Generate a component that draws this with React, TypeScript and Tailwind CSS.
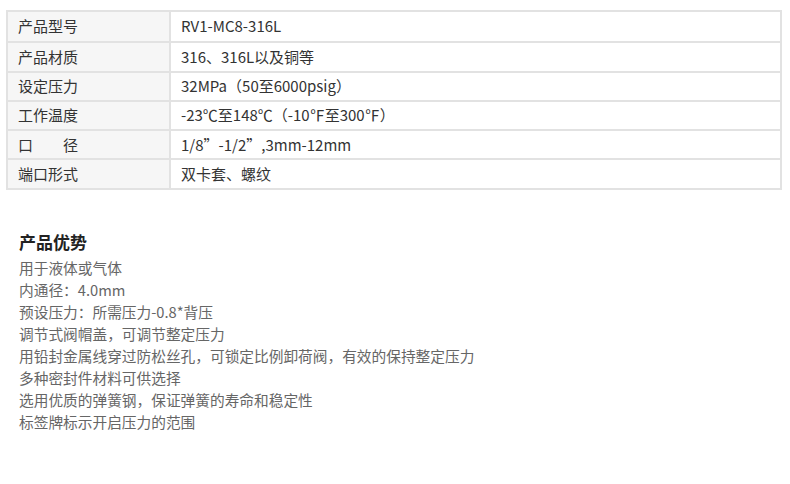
import React from 'react';

const specs: [string, string][] = [
  ['产品型号', 'RV1-MC8-316L'],
  ['产品材质', '316、316L以及铜等'],
  ['设定压力', '32MPa（50至6000psig）'],
  ['工作温度', '-23℃至148℃（-10℉至300℉）'],
  ['口　　径', '1/8”-1/2”,3mm-12mm'],
  ['端口形式', '双卡套、螺纹'],
];

const advantages = [
  '用于液体或气体',
  '内通径：4.0mm',
  '预设压力：所需压力-0.8*背压',
  '调节式阀帽盖，可调节整定压力',
  '用铅封金属线穿过防松丝孔，可锁定比例卸荷阀，有效的保持整定压力',
  '多种密封件材料可供选择',
  '选用优质的弹簧钢，保证弹簧的寿命和稳定性',
  '标签牌标示开启压力的范围',
];

const font = { fontFamily: '"Noto Sans CJK SC", "Noto Sans", sans-serif' };

const App: React.FC = () => {
  return (
    <div className="w-[790px] h-[484px] bg-white" style={font}>
      {/* Spec table */}
      <div className="pt-[10px] pl-[6px]">
        <div className="w-[776px] border-2 border-[#e2e2e2]">
          {specs.map(([label, value], i) => (
            <div
              key={label}
              className={`flex h-[29.3px] ${i > 0 ? 'border-t-2 border-[#e2e2e2]' : ''}`}
            >
              <div className="w-[163px] shrink-0 bg-[#f6f6f6] border-r-2 border-[#e2e2e2] pl-[10px] flex items-center text-[15px] text-[#333]">
                {label}
              </div>
              <div className="flex-1 pl-[10px] flex items-center text-[15px] text-[#333]">
                {value}
              </div>
            </div>
          ))}
        </div>
      </div>

      {/* Advantages */}
      <div className="pl-[19px] pt-[40px]">
        <h3 className="text-[17px] font-bold text-[#222] leading-[24px]">产品优势</h3>
        <ul className="mt-[3px]">
          {advantages.map((item) => (
            <li key={item} className="text-[14.7px] leading-[22.1px] text-[#666]">
              {item}
            </li>
          ))}
        </ul>
      </div>
    </div>
  );
};

export default App;
